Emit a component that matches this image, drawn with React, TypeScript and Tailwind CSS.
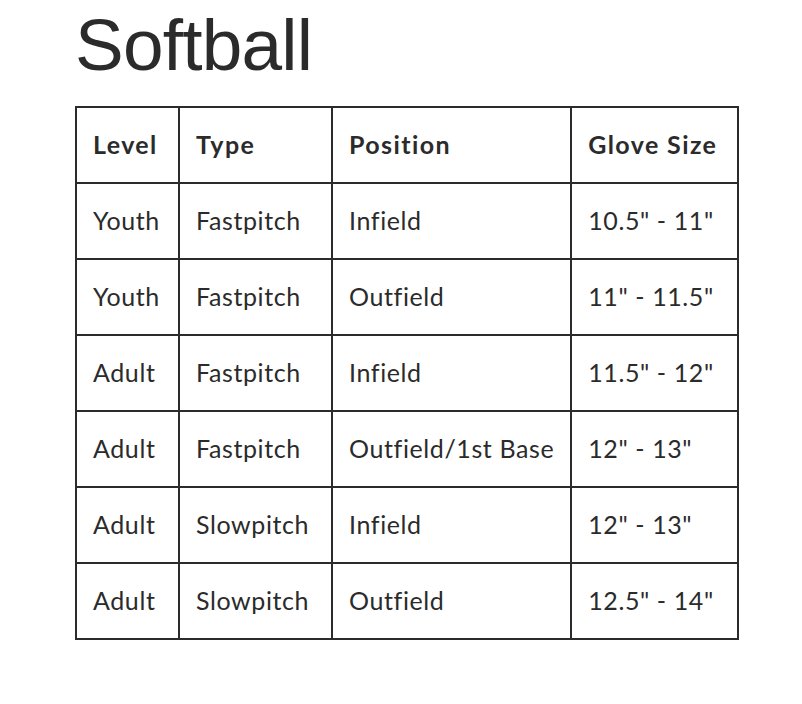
import React from "react";

const rows = [
  ["Youth", "Fastpitch", "Infield", "10.5\" - 11\""],
  ["Youth", "Fastpitch", "Outfield", "11\" - 11.5\""],
  ["Adult", "Fastpitch", "Infield", "11.5\" - 12\""],
  ["Adult", "Fastpitch", "Outfield/1st Base", "12\" - 13\""],
  ["Adult", "Slowpitch", "Infield", "12\" - 13\""],
  ["Adult", "Slowpitch", "Outfield", "12.5\" - 14\""],
];

const widths = ["w-[103px]", "w-[153px]", "w-[239px]", "w-[167px]"];

export default function App() {
  return (
    <div className="min-h-screen bg-white pl-[75px] pt-[8px] text-[#2b2b2b]">
      <h1 className="font-['Liberation_Sans',Arial,sans-serif] text-[73px] leading-none tracking-[-0.8px]">
        Softball
      </h1>
      <table className="mt-[25px] table-fixed border-collapse border-2 border-[#2b2b2b] font-['Lato','Noto_Sans',sans-serif] text-[25px] [font-variant-ligatures:none]">
        <thead>
          <tr>
            {["Level", "Type", "Position", "Glove Size"].map((h, i) => (
              <th
                key={h}
                className={`${widths[i]} h-[76px] whitespace-nowrap border-2 border-[#2b2b2b] px-[16px] text-left font-bold tracking-[1.4px]`}
              >
                {h}
              </th>
            ))}
          </tr>
        </thead>
        <tbody>
          {rows.map((r, ri) => (
            <tr key={ri}>
              {r.map((c, ci) => (
                <td
                  key={ci}
                  className="h-[76px] whitespace-nowrap border-2 border-[#2b2b2b] px-[16px] align-middle tracking-[0.6px]"
                >
                  {c}
                </td>
              ))}
            </tr>
          ))}
        </tbody>
      </table>
    </div>
  );
}
